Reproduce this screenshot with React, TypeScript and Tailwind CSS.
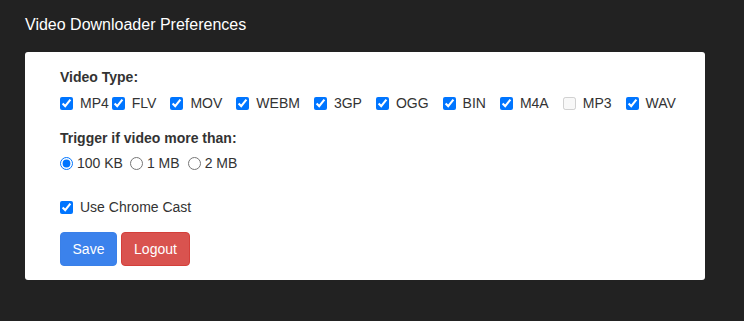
import { useState } from 'react';

type VideoType = { name: string; checked: boolean; disabled?: boolean; gap: string };

const VIDEO_TYPES: VideoType[] = [
  { name: 'MP4', checked: true, gap: 'mr-[3px]' },
  { name: 'FLV', checked: true, gap: 'mr-[14px]' },
  { name: 'MOV', checked: true, gap: 'mr-[14px]' },
  { name: 'WEBM', checked: true, gap: 'mr-[14px]' },
  { name: '3GP', checked: true, gap: 'mr-[14px]' },
  { name: 'OGG', checked: true, gap: 'mr-[14px]' },
  { name: 'BIN', checked: true, gap: 'mr-[14px]' },
  { name: 'M4A', checked: true, gap: 'mr-[14px]' },
  { name: 'MP3', checked: false, disabled: true, gap: 'mr-[14px]' },
  { name: 'WAV', checked: true, gap: 'mr-0' },
];

const SIZES = [
  { value: '100kb', label: '100 KB', gap: 'mr-[7px]' },
  { value: '1mb', label: '1 MB', gap: 'mr-[8px]' },
  { value: '2mb', label: '2 MB', gap: 'mr-0' },
];

export default function App() {
  const [size, setSize] = useState('100kb');

  return (
    <div className="min-h-screen bg-[#222222] px-[25px] pt-4 font-['Liberation_Sans',Arial,sans-serif]">
      <h1 className="text-[16px] leading-[18px] text-white mb-[18px]">Video Downloader Preferences</h1>

      <div className="w-[680px] rounded-[3px] bg-white pl-[35px] pt-[15px] pb-[14px] text-[14px] leading-5 text-[#333333]">
        <div className="font-bold">Video Type:</div>
        <div className="mt-[6px] flex h-5 items-center">
          {VIDEO_TYPES.map((v) => (
            <label key={v.name} className={`flex items-center ${v.gap}`}>
              <input
                type="checkbox"
                defaultChecked={v.checked}
                disabled={v.disabled}
                className="m-0 mt-[1px] h-[13px] w-[13px]"
              />
              <span className="ml-[7px]">{v.name}</span>
            </label>
          ))}
        </div>

        <div className="mt-[15px] font-bold">Trigger if video more than:</div>
        <div className="mt-[5px] flex h-5 items-center">
          {SIZES.map((s) => (
            <label key={s.value} className={`flex items-center ${s.gap}`}>
              <input
                type="radio"
                name="size"
                checked={size === s.value}
                onChange={() => setSize(s.value)}
                className="m-0 mt-[1px] h-[13px] w-[13px]"
              />
              <span className="ml-[4px]">{s.label}</span>
            </label>
          ))}
        </div>

        <label className="mt-[24px] flex h-5 items-center">
          <input type="checkbox" defaultChecked className="m-0 mt-[1px] h-[13px] w-[13px]" />
          <span className="ml-[7px]">Use Chrome Cast</span>
        </label>

        <div className="mt-[15px] flex gap-1">
          <button className="h-[34px] w-[57px] rounded-[4px] border border-[#3a80e8] bg-[#3b82ec] text-white">
            Save
          </button>
          <button className="h-[34px] w-[69px] rounded-[4px] border border-[#d43f3a] bg-[#d9534f] text-white">
            Logout
          </button>
        </div>
      </div>
    </div>
  );
}
